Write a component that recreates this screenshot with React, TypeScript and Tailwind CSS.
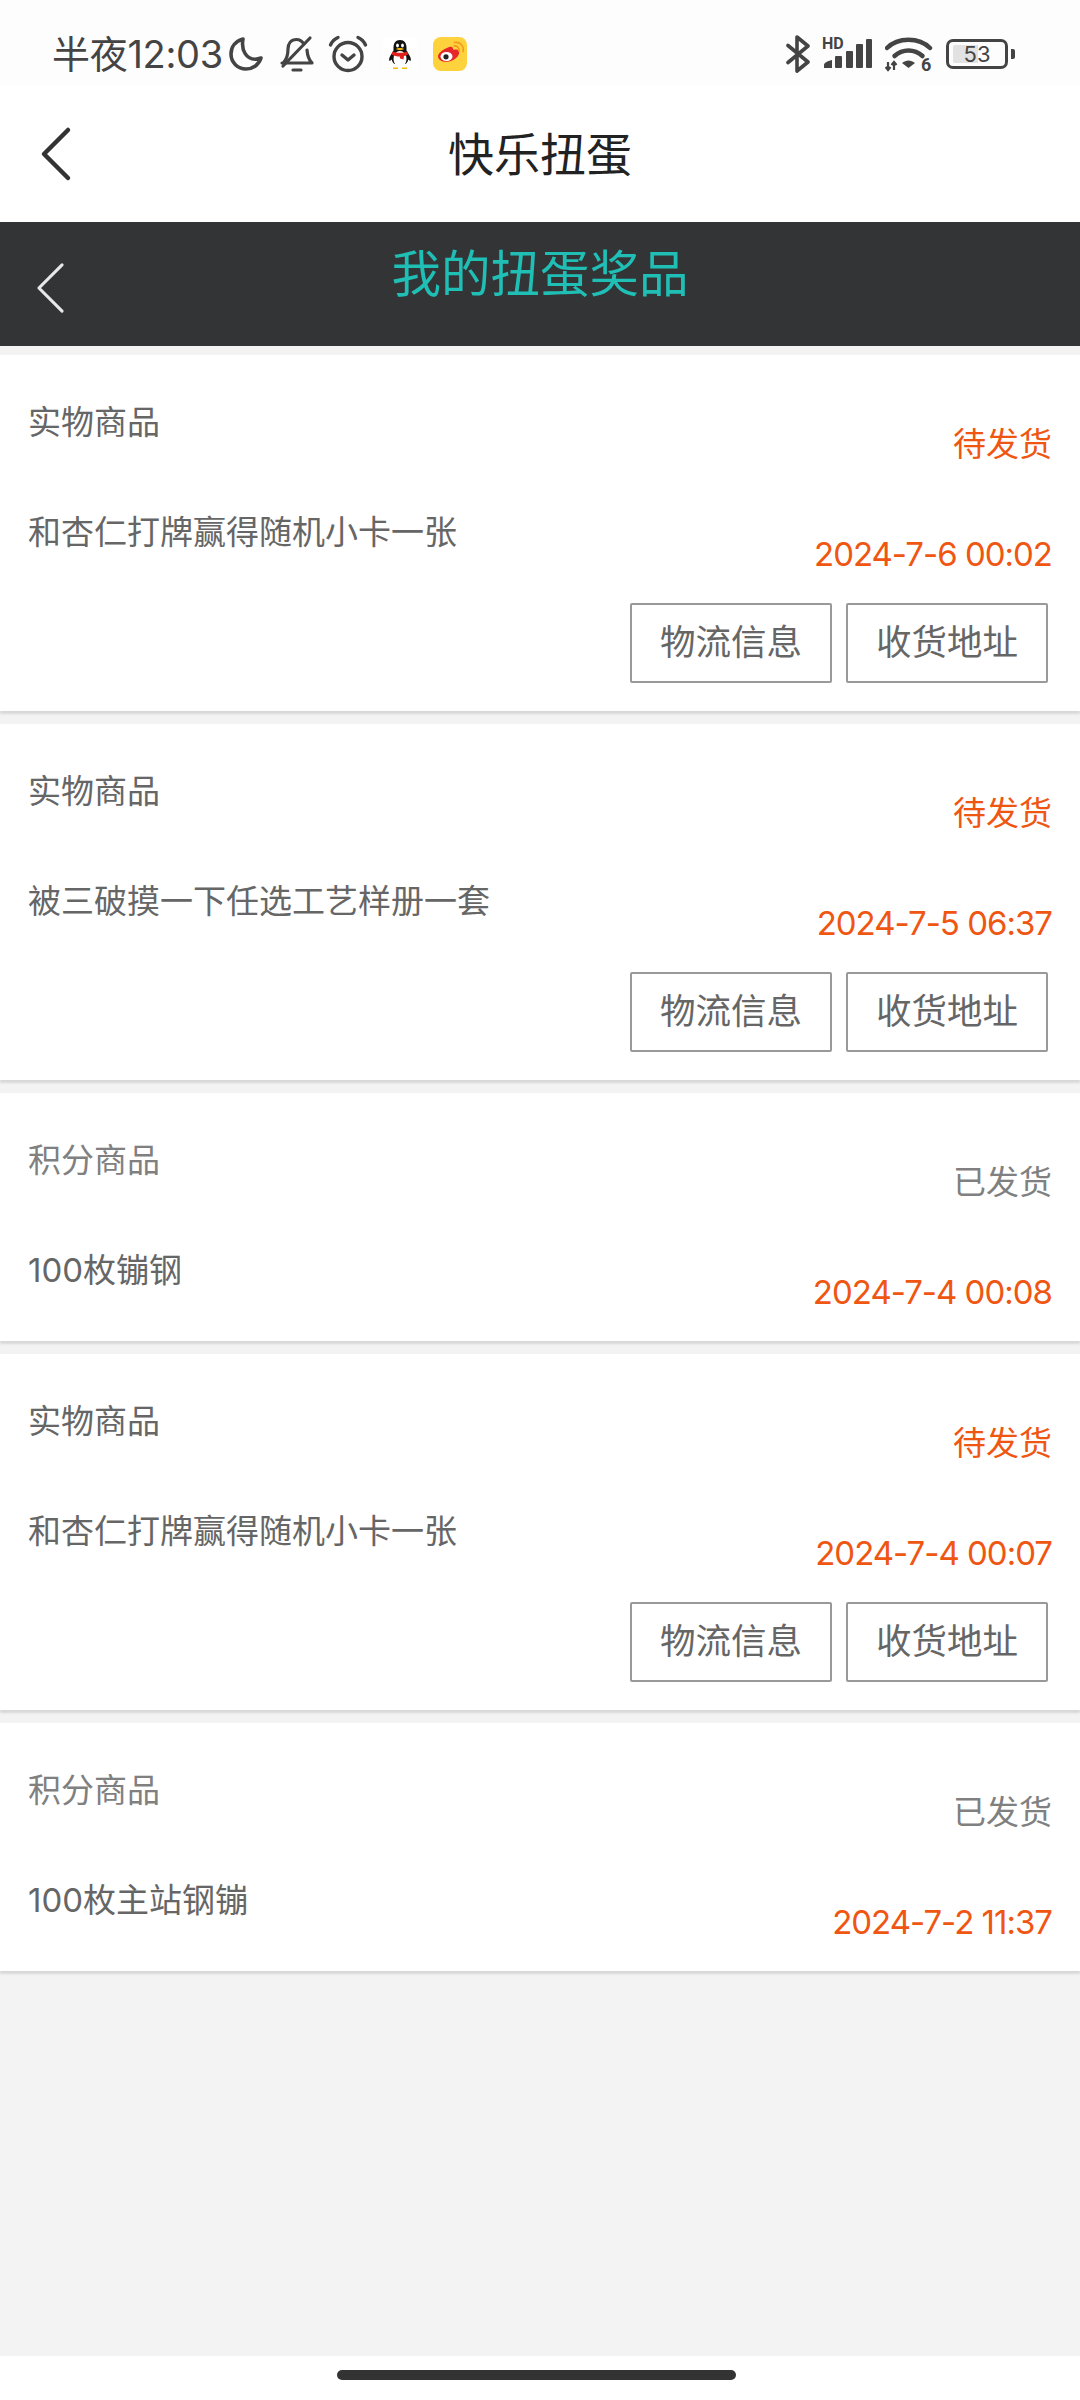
type Prize = {
  kind: string
  name: string
  status: string
  time: string
  pending: boolean
}

const prizes: Prize[] = [
  { kind: "实物商品", name: "和杏仁打牌赢得随机小卡一张", status: "待发货", time: "2024-7-6 00:02", pending: true },
  { kind: "实物商品", name: "被三破摸一下任选工艺样册一套", status: "待发货", time: "2024-7-5 06:37", pending: true },
  { kind: "积分商品", name: "100枚镚钢", status: "已发货", time: "2024-7-4 00:08", pending: false },
  { kind: "实物商品", name: "和杏仁打牌赢得随机小卡一张", status: "待发货", time: "2024-7-4 00:07", pending: true },
  { kind: "积分商品", name: "100枚主站钢镚", status: "已发货", time: "2024-7-2 11:37", pending: false },
]

function StatusIcons() {
  return (
    <div className="flex items-center">
      {/* moon */}
      <svg className="ml-[5px] h-[36px] w-[36px]" viewBox="0 0 36 36" fill="none" stroke="#444" strokeWidth="3.6" strokeLinecap="round" strokeLinejoin="round">
        <path d="M15 3C8 5 3 10.500 3 18c0 8.500 6.800 15 15 15 7 0 13-4.500 15-11-2 .8-4 1.200-6 1.200C19 23.200 12.800 15 15 3z" />
      </svg>
      {/* bell off */}
      <svg className="ml-[15px] h-[38px] w-[36px]" viewBox="0 0 36 38" fill="none" stroke="#444" strokeWidth="3.2" strokeLinecap="round" strokeLinejoin="round">
        <path d="M25 9c-2-3-4.500-4.500-7.500-4.500C12 4.500 9 8.500 9 14c0 6-1.500 10-4 13" />
        <path d="M3 28h30c-3-3-4.500-7-5-13" />
        <path d="M31 3 4 31" />
        <path d="M14 35h8" />
      </svg>
      {/* alarm */}
      <svg className="ml-[13px] h-[38px] w-[40px]" viewBox="0 0 40 38" fill="none" stroke="#444" strokeWidth="3.4" strokeLinecap="round" strokeLinejoin="round">
        <circle cx="20" cy="21.500" r="14" />
        <path d="m14 20 6 5 6-5" />
        <path d="M2.500 10C4 6.500 6.500 4 10 2.500" />
        <path d="M37.500 10C36 6.500 33.500 4 30 2.500" />
      </svg>
      {/* qq */}
      <svg className="ml-[15px] h-[34px] w-[34px] bg-white" viewBox="0 0 34 34">
        <path d="M17 3c-4.500 0-6.500 3.500-6.500 7.500v3l-3 5c-1.500 2.500-1.800 5-.8 5.500l2-1.500c.5 2 1.500 3.500 2.800 4.500h11c1.300-1 2.300-2.500 2.800-4.500l2 1.500c1-.5.700-3-.8-5.500l-3-5v-3C23.500 6.500 21.500 3 17 3z" fill="#111" />
        <ellipse cx="17" cy="22" rx="6.500" ry="8" fill="#fff" />
        <path d="M9.500 14.500c4 1.800 11 1.800 15 0l.5 3c-1 .8-2.500 1.300-4 1.500l-.5 3.500-3.500-1-.2-2c-3 0-6-.5-8-2z" fill="#e0201c" />
        <ellipse cx="14.500" cy="8.500" rx="1.400" ry="2" fill="#fff" />
        <ellipse cx="19.500" cy="8.500" rx="1.400" ry="2" fill="#fff" />
        <path d="M13 12c2-1.200 6-1.200 8 0-2 1.500-6 1.500-8 0z" fill="#f5b800" />
        <path d="M10 30.500h5v1.500h-5zM19 30.500h5v1.500h-5z" fill="#f5b800" />
      </svg>
      {/* weibo */}
      <svg className="ml-[16px] h-[34px] w-[34px]" viewBox="0 0 34 34">
        <rect width="34" height="34" rx="8" fill="#fdd23c" />
        <path d="M14 11c3-1.800 5.500-1.800 6 .5.200 1 0 1.500 1 1.300 3.500-.8 6 1 5 4-1.200 4-6.500 8-12.500 8C8.500 24.800 5 22.500 5 19.500 5 16.500 9 13 14 11z" fill="#e6262a" />
        <ellipse cx="13.500" cy="19.500" rx="6" ry="4.500" fill="#fff" />
        <circle cx="13" cy="19.800" r="2.600" fill="#222" />
        <path d="M21 9c3-.6 5.500 2 5 5M21.500 5.500c5.500-1 9.800 3.500 8.500 9" fill="none" stroke="#f39a1f" strokeWidth="1.600" strokeLinecap="round" />
      </svg>
    </div>
  )
}

function SystemIcons() {
  return (
    <div className="flex items-center">
      {/* bluetooth */}
      <svg className="h-[38px] w-[24px]" viewBox="0 0 24 38" fill="none" stroke="#444" strokeWidth="3.600" strokeLinecap="round" strokeLinejoin="round">
        <path d="M2 10.500 22 27 11 36V2l11 9L2 27.500" />
      </svg>
      {/* HD signal */}
      <svg className="ml-[12px] h-[46px] w-[50px]" viewBox="0 -6 50 46">
        <text x="0" y="12" fontSize="16" fontWeight="700" fill="#444" fontFamily="Roboto, sans-serif">HD</text>
        <path d="M2 31v-3c0-2 3-4 8-5v8z" fill="#444" />
        <rect x="13" y="19" width="7" height="12" rx="1" fill="#444" />
        <rect x="24" y="14" width="7" height="17" rx="1" fill="#444" />
        <rect x="34" y="7" width="7" height="24" rx="1" fill="#444" />
        <rect x="44" y="2" width="6" height="29" rx="1" fill="#444" />
      </svg>
      {/* wifi 6 */}
      <svg className="ml-[13px] h-[52px] w-[50px]" viewBox="0 -8 50 52">
        <path d="M2 12C13 1 34 1 45 12" fill="none" stroke="#444" strokeWidth="4.500" strokeLinecap="round" />
        <path d="M9.500 20c8-7.500 20-7.500 28 0" fill="none" stroke="#444" strokeWidth="4.500" strokeLinecap="round" />
        <path d="M17 27c4-3.500 9-3.500 13 0l-6.500 5z" fill="#444" />
        <path d="M3 26v8M0.500 31 3 34l2.500-3M9 34v-8M6.500 29 9 26l2.500 3" fill="none" stroke="#444" strokeWidth="2.200" />
        <text x="36" y="35" fontSize="18" fontWeight="700" fill="#444" fontFamily="Roboto, sans-serif">6</text>
      </svg>
      {/* battery */}
      <div className="ml-[11px] flex items-center">
        <div className="relative flex h-[30px] w-[62px] items-center rounded-[7px] border-[3px] border-[#444] pl-[4px]">
          <div className="h-[18px] w-[25px] rounded-l-[2px] bg-[#e2e2e2]" />
          <span className="absolute inset-0 text-center text-[22px] leading-[24px] text-[#444]">53</span>
        </div>
        <div className="ml-[3px] h-[10px] w-[4px] rounded-r-[2px] bg-[#444]" />
      </div>
    </div>
  )
}

function BackArrow({ className, color, width }: { className: string; color: string; width: number }) {
  return (
    <svg className={className} viewBox="0 0 32 56" fill="none" stroke={color} strokeWidth={width} strokeLinecap="round" strokeLinejoin="round">
      <path d="M28 4 4 28l24 24" />
    </svg>
  )
}

function PrizeCard({ prize, showActions }: { prize: Prize; showActions: boolean }) {
  return (
    <div className="bg-white shadow-[0_3px_2px_#d8d8d8]">
      <div className="flex h-[248px] justify-between pl-[28px] pr-[28px]">
        <div className="flex flex-col gap-[66px] pt-[45px] text-[33px] leading-[44px] text-[#666]">
          <div className={prize.pending ? "" : "text-[#808080]"}>{prize.kind}</div>
          <div>{prize.name}</div>
        </div>
        <div className="flex flex-col items-end gap-[66px] pt-[67px] text-[33px] leading-[44px] text-[#ef5612]">
          <div className={prize.pending ? "" : "text-[#808080]"}>{prize.status}</div>
          <div className="tracking-[-1px]">{prize.time}</div>
        </div>
      </div>
      {showActions && (
        <div className="flex h-[108px] justify-end gap-[14px] pr-[32px]">
          <button className="h-[80px] w-[202px] rounded-[2px] border-2 border-[#999] text-[35.5px] text-[#666]">物流信息</button>
          <button className="h-[80px] w-[202px] rounded-[2px] border-2 border-[#999] text-[35.5px] text-[#666]">收货地址</button>
        </div>
      )}
    </div>
  )
}

export default function App() {
  return (
    <div className="flex min-h-[2400px] w-[1080px] flex-col bg-[#f3f3f3] font-['Inter','Noto_Sans_CJK_SC',sans-serif]">
      <div className="flex h-[85px] items-center justify-between bg-[#fdfdfd] pl-[52px] pr-[65px] pt-[22px]">
        <div className="flex items-center">
          <span className="text-[38px] leading-[44px] tracking-[-0.3px] text-[#444]">半夜12:03</span>
          <StatusIcons />
        </div>
        <SystemIcons />
      </div>

      <div className="grid h-[137px] grid-cols-[1fr_auto_1fr] items-center bg-white">
        <BackArrow className="ml-[40px] h-[56px] w-[32px]" color="#333" width={4.500} />
        <div className="text-[46px] leading-[60px] text-[#222]">快乐扭蛋</div>
      </div>

      <div className="grid h-[124px] grid-cols-[1fr_auto_1fr] items-start bg-[#333436]">
        <BackArrow className="ml-[35px] mt-[39px] h-[54px] w-[31px]" color="#e8e8e8" width={3.200} />
        <div className="pt-[20px] text-[49.5px] leading-[64px] text-[#20bfb6]">我的扭蛋奖品</div>
      </div>

      <div className="flex flex-1 flex-col gap-[13px] pt-[9px]">
        {prizes.map((p, i) => (
          <PrizeCard key={i} prize={p} showActions={p.pending} />
        ))}
      </div>

      <div className="flex h-[44px] justify-center bg-white pr-[7px] pt-[14px]">
        <div className="h-[10px] w-[399px] rounded-full bg-[#333]" />
      </div>
    </div>
  )
}
